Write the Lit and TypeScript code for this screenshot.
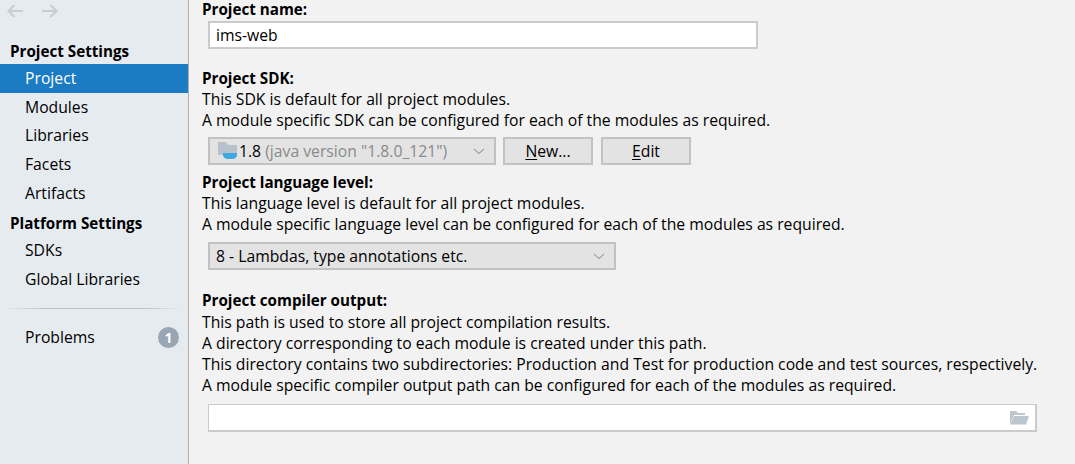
import {LitElement, html, css} from 'lit';
import {customElement} from 'lit/decorators.js';

const chevron = html`<svg class="chevron" width="12" height="7" viewBox="0 0 12 7"><path d="M1 1l5 4.500 5-4.500" fill="none" stroke="#808080" stroke-width="1"/></svg>`;

@customElement('app-root')
export class AppRoot extends LitElement {
  static styles = css`
    :host {
      display: flex;
      width: 1075px;
      height: 464px;
      overflow: hidden;
      background: #f2f2f2;
      color: #000;
      font-family: 'Open Sans', 'Noto Sans', sans-serif;
      font-size: 15.730px;
    }
    .side {
      box-sizing: border-box;
      width: 189px;
      flex: none;
      background: #e6ebf0;
      border-right: 1px solid #b0b0b0;
    }
    .nav-arrows {
      display: flex;
      gap: 17px;
      height: 40px;
      padding: 3px 0 0 6px;
      box-sizing: border-box;
    }
    .group {
      height: 24px;
      line-height: 22px;
      padding-left: 10px;
      font-weight: 700;
      font-size: 15.200px;
    }
    .item {
      height: 28.700px;
      line-height: 28.700px;
      padding-left: 25px;
      display: flex;
      justify-content: space-between;
      align-items: center;
    }
    .item.selected {
      background: #1b7bc3;
      color: #fff;
    }
    .group.second {
      height: 29px;
      line-height: 33px;
    }
    .divider {
      height: 1px;
      margin: 14px 5px 14px;
      background: linear-gradient(90deg, #e6ebf0, #c0c4c8 20%, #c0c4c8 80%, #e6ebf0);
    }
    .badge {
      width: 21px;
      height: 21px;
      margin-right: 9px;
      border-radius: 50%;
      background: #98a5b3;
      color: #fff;
      font-weight: 700;
      font-size: 14px;
      line-height: 21px;
      text-align: center;
    }
    .main {
      flex: 1;
      padding-left: 13px;
      min-width: 0;
    }
    .label {
      font-weight: 700;
      font-size: 15.200px;
      height: 21px;
      line-height: 21px;
    }
    .label.first {
      height: 18px;
      line-height: 18px;
    }
    .label.tall {
      height: 22px;
    }
    .text {
      height: 21px;
      line-height: 21px;
      white-space: nowrap;
    }
    .field {
      box-sizing: border-box;
      margin-left: 6px;
      height: 28px;
      background: #fff;
      border: 2px solid #cbcbcb;
      line-height: 24px;
      padding-left: 6px;
      display: flex;
      justify-content: space-between;
      align-items: center;
    }
    .name-field {
      width: 550px;
      margin-top: 3px;
    }
    .output-field {
      width: 829px;
      margin-top: 8px;
      border-width: 1px 2px 2px 1px;
    }
    .row {
      display: flex;
      gap: 7px;
      margin-left: 6px;
      margin-top: 6px;
    }
    .combo,
    .btn {
      box-sizing: border-box;
      height: 28px;
      background: #e3e3e3;
      border: 2px solid #c2c2c2;
      line-height: 24px;
    }
    .combo {
      display: flex;
      align-items: center;
      justify-content: space-between;
      padding: 0 9px 0 6px;
      white-space: nowrap;
    }
    .sdk {
      width: 288px;
      padding-left: 7px;
    }
    .sdk-value {
      display: flex;
      align-items: center;
    }
    .muted {
      color: #8a8a8a;
    }
    .level {
      width: 408px;
      margin: 7px 0 0 6px;
    }
    .btn {
      width: 90px;
      text-align: center;
      margin-right: 1px;
    }
    .btn u {
      text-underline-offset: 2px;
    }
    .sp-b { height: 7px; }
    .sp-c { height: 19px; }
    .sp-d { height: 20px; }
    .folder {
      margin-right: 6px;
    }
  `;

  render() {
    return html`
      <div class="side">
        <div class="nav-arrows">
          <svg width="18" height="16" viewBox="0 0 18 16"><path d="M17 8H2.500M8.500 2L2.500 8l6 6" fill="none" stroke="#c9cdd0" stroke-width="2.200"/></svg>
          <svg width="18" height="16" viewBox="0 0 18 16"><path d="M1 8h14.500M9.500 2l6 6-6 6" fill="none" stroke="#c9cdd0" stroke-width="2.200"/></svg>
        </div>
        <div class="group">Project Settings</div>
        <div class="item selected">Project</div>
        <div class="item">Modules</div>
        <div class="item">Libraries</div>
        <div class="item">Facets</div>
        <div class="item">Artifacts</div>
        <div class="group second">Platform Settings</div>
        <div class="item">SDKs</div>
        <div class="item">Global Libraries</div>
        <div class="divider"></div>
        <div class="item">Problems<span class="badge">1</span></div>
      </div>
      <div class="main">
        <div class="label first">Project name:</div>
        <div class="field name-field">ims-web</div>
        <div class="sp-c"></div>
        <div class="label">Project SDK:</div>
        <div class="text">This SDK is default for all project modules.</div>
        <div class="text">A module specific SDK can be configured for each of the modules as required.</div>
        <div class="row">
          <div class="combo sdk">
            <span class="sdk-value">
              <svg width="22" height="20" viewBox="0 0 22 20">
                <path d="M1 1h8l2 3h9v10H1z" fill="#b7c2cc"/>
                <path d="M6 12h14v2c0 2-2 4-5 4h-4c-3 0-5-2-5-4z" fill="#3fa8e0"/>
              </svg>
              <span>1.8 <span class="muted">(java version "1.8.0_121")</span></span>
            </span>
            ${chevron}
          </div>
          <div class="btn"><u>N</u>ew...</div>
          <div class="btn"><u>E</u>dit</div>
        </div>
        <div class="sp-b"></div>
        <div class="label">Project language level:</div>
        <div class="text">This language level is default for all project modules.</div>
        <div class="text">A module specific language level can be configured for each of the modules as required.</div>
        <div class="combo level">8 - Lambdas, type annotations etc. ${chevron}</div>
        <div class="sp-d"></div>
        <div class="label tall">Project compiler output:</div>
        <div class="text">This path is used to store all project compilation results.</div>
        <div class="text">A directory corresponding to each module is created under this path.</div>
        <div class="text">This directory contains two subdirectories: Production and Test for production code and test sources, respectively.</div>
        <div class="text">A module specific compiler output path can be configured for each of the modules as required.</div>
        <div class="field output-field">
          <span></span>
          <svg class="folder" width="19" height="15" viewBox="0 0 19 15">
            <path d="M0 1h6l2 2h7v2H4L0 14z" fill="#bcc6ce"/>
            <path d="M4 6h15l-3 8.500H0z" fill="#bcc6ce"/>
          </svg>
        </div>
      </div>
    `;
  }
}
